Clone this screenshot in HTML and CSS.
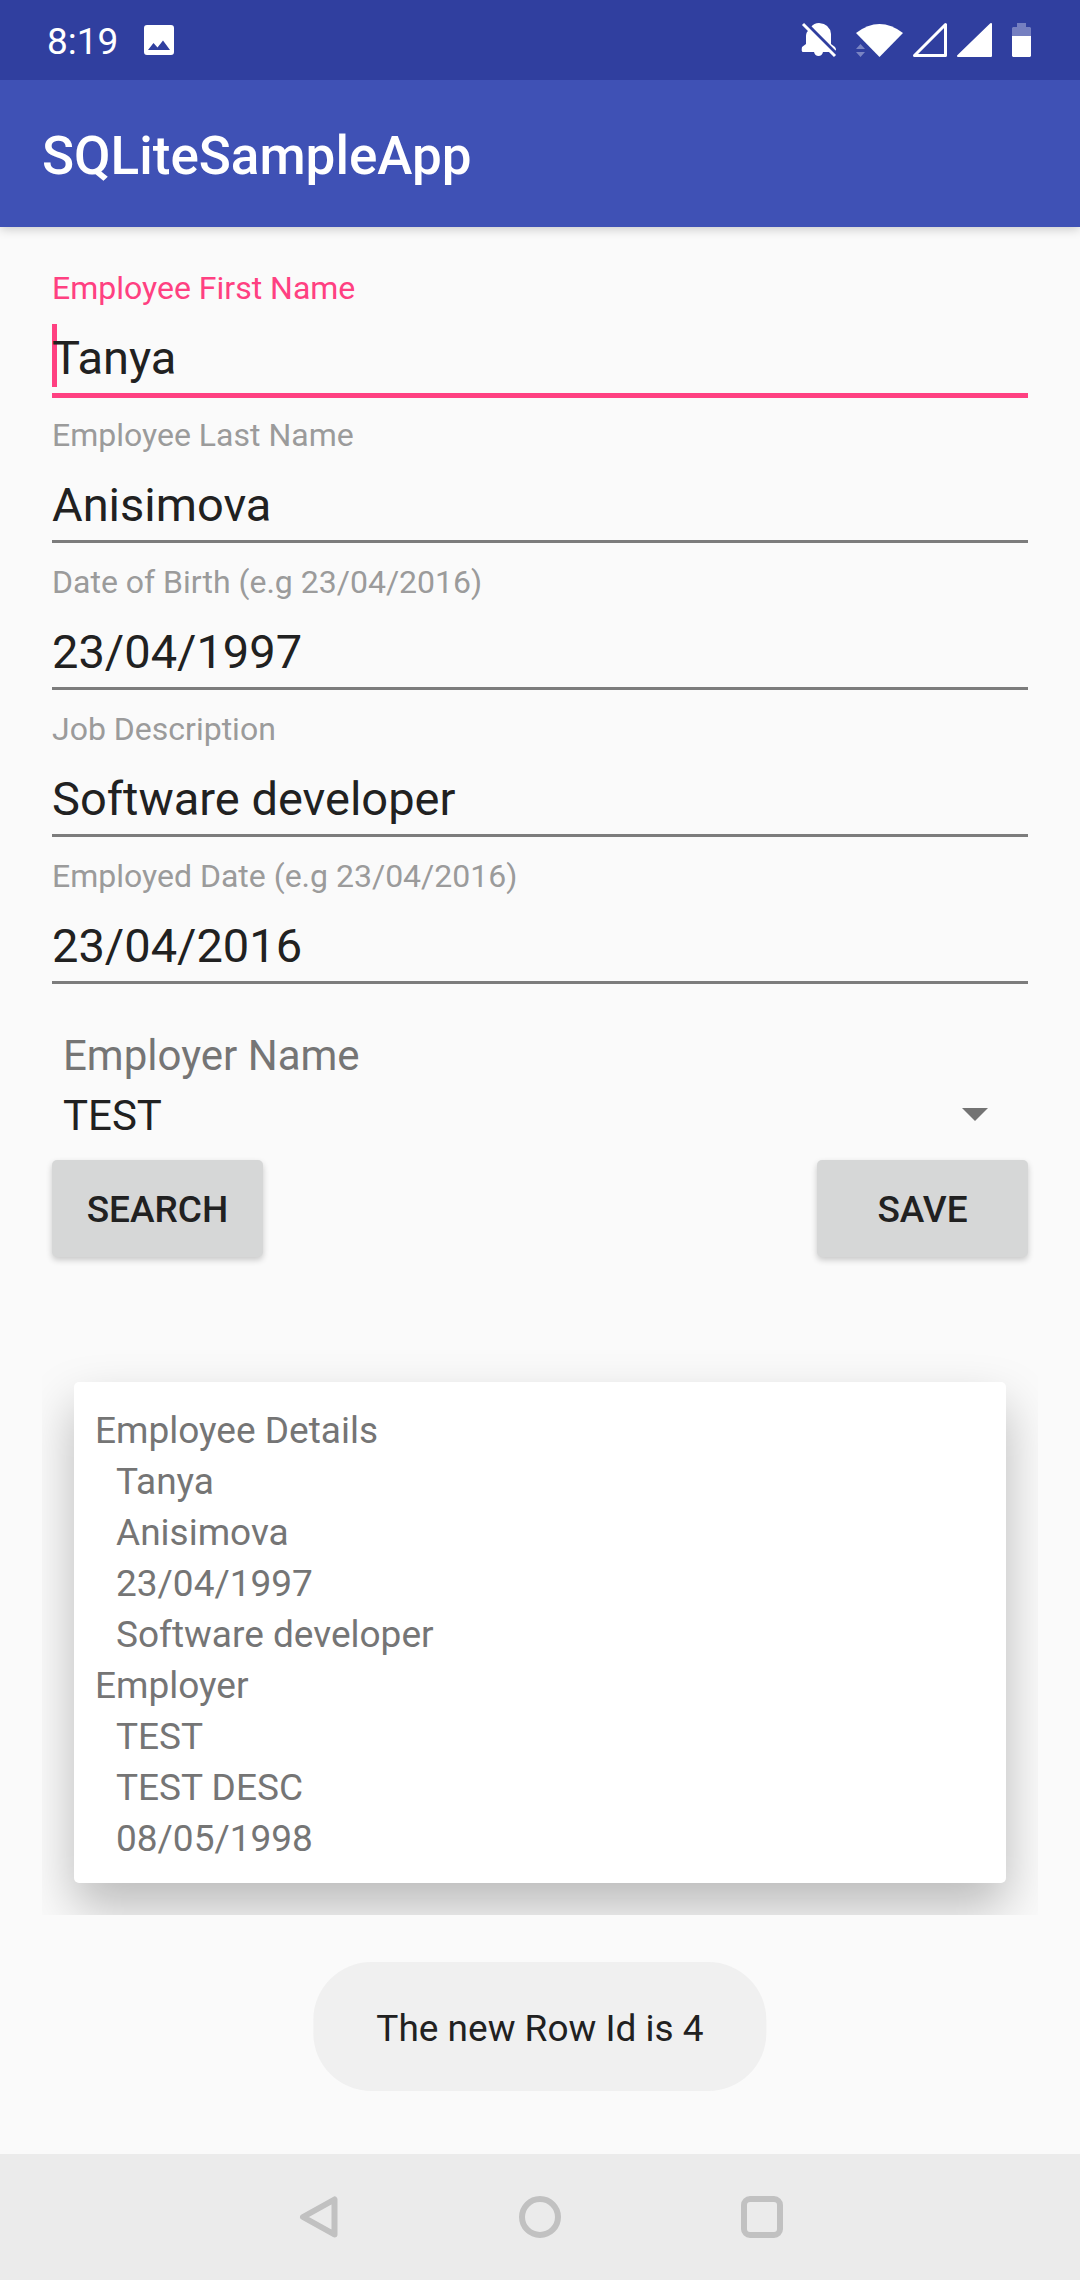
FILE: index.html
```html
<!DOCTYPE html>
<html lang="en">
<head>
<meta charset="utf-8">
<meta name="viewport" content="width=device-width, initial-scale=1">
<title>SQLiteSampleApp</title>
<link rel="stylesheet" href="styles.css">
</head>
<body>
<div class="status-bar">
  <div class="status-left">
    <span>8:19</span>
    <svg width="30" height="30" viewBox="0 0 30 30" aria-hidden="true"><path fill="#fff" fill-rule="evenodd" d="M3 0H27Q30 0 30 3V27Q30 30 27 30H3Q0 30 0 27V3Q0 0 3 0ZM4 25H26L19 15.500L13.500 22.500L9.500 18Z"/></svg>
  </div>
  <div class="status-right">
    <svg class="bell" width="36" height="36" viewBox="0 0 36 36" aria-hidden="true"><path fill="#fff" d="M8 8L30 30H2Q0 30 1 25L5 22V14Q5 10 8 8ZM10 5Q13 1 18 1Q29 2 30 12V22L34 25Q36 28 34 29ZM13 30H22Q21 34 17.500 34Q14 34 13 30Z"/><path stroke="#303f9f" stroke-width="3" d="M5 1L36 32"/><path stroke="#fff" stroke-width="3" d="M2 2L34 34"/></svg>
    <svg width="47" height="36" viewBox="0 0 47 36" aria-hidden="true"><path fill="#fff" d="M0 11Q23.500 -7 47 11L23.500 35Z"/><path fill="#7a84c3" d="M0 27L4.500 22L9 27ZM0 30H9L4.500 35Z"/></svg>
    <svg width="36" height="36" viewBox="0 0 36 36" aria-hidden="true"><path fill="none" stroke="#fff" stroke-width="3" stroke-linejoin="round" d="M33.500 2.500V33.500H2.500Z"/></svg>
    <svg width="35" height="36" viewBox="0 0 35 36" aria-hidden="true"><path fill="#fff" stroke="#fff" stroke-width="2" stroke-linejoin="round" d="M34 2V34H1Z"/></svg>
    <svg class="battery" width="19" height="36" viewBox="0 0 19 36" aria-hidden="true"><path fill="#757fc0" d="M5 1H14V5H18L19 6V14H0V6L1 5H5Z"/><path fill="#fff" d="M0 14H19V34L18 35H1L0 34Z"/></svg>
  </div>
</div>
<header class="app-bar"><h1>SQLiteSampleApp</h1></header>
<main>
  <form>
    <div class="fields">
      <div class="field active"><label for="first">Employee First Name</label><input id="first" type="text" value="Tanya"></div>
      <div class="field"><label for="last">Employee Last Name</label><input id="last" type="text" value="Anisimova"></div>
      <div class="field"><label for="birth">Date of Birth (e.g 23/04/2016)</label><input id="birth" type="text" value="23/04/1997"></div>
      <div class="field"><label for="job">Job Description</label><input id="job" type="text" value="Software developer"></div>
      <div class="field"><label for="employed">Employed Date (e.g 23/04/2016)</label><input id="employed" type="text" value="23/04/2016"></div>
    </div>
    <div class="employer">
      <label for="employer">Employer Name</label>
      <div class="spinner">
        <select id="employer"><option>TEST</option></select>
        <svg width="26" height="13" viewBox="0 0 26 13" aria-hidden="true"><path fill="#737373" d="M0 0H26L13 13Z"/></svg>
      </div>
    </div>
    <div class="actions">
      <button type="button">SEARCH</button>
      <button type="button">SAVE</button>
    </div>
  </form>
  <div class="results">
    <section class="card">
      <h2>Employee Details</h2>
      <p>Tanya</p>
      <p>Anisimova</p>
      <p>23/04/1997</p>
      <p>Software developer</p>
      <h2>Employer</h2>
      <p>TEST</p>
      <p>TEST DESC</p>
      <p>08/05/1998</p>
    </section>
  </div>
  <div class="toast" role="status">The new Row Id is 4</div>
</main>
<nav class="nav-bar">
  <button type="button" aria-label="Back"><svg width="42" height="42" viewBox="0 0 42 42"><path fill="none" stroke="#c1c1c1" stroke-width="6" stroke-linejoin="round" d="M37.500 3.500V38.500L6 21Z"/></svg></button>
  <button type="button" aria-label="Home"><svg width="42" height="42" viewBox="0 0 42 42"><circle cx="21" cy="21" r="18" fill="none" stroke="#c1c1c1" stroke-width="6"/></svg></button>
  <button type="button" aria-label="Overview"><svg width="42" height="42" viewBox="0 0 42 42"><rect x="3" y="3" width="36" height="36" rx="6" fill="none" stroke="#c1c1c1" stroke-width="6"/></svg></button>
</nav>
</body>
</html>
```
FILE: styles.css
```css
* {
  box-sizing: border-box;
}

body {
  margin: 0;
  min-height: 100vh;
  display: flex;
  flex-direction: column;
  background: #fafafa;
  color: #212121;
  font-family: Roboto, sans-serif;
  font-size: 37px;
}

svg {
  display: block;
}

h1, h2, p {
  margin: 0;
}

input, select, button {
  font: inherit;
  color: inherit;
  border: 0;
  border-radius: 0;
  margin: 0;
  padding: 0;
}

.status-bar {
  position: relative;
  z-index: 1;
  display: flex;
  justify-content: space-between;
  align-items: center;
  height: 80px;
  padding: 0 49px 0 47px;
  background: #303f9f;
  color: #fff;
}

.status-left,
.status-right {
  display: flex;
  align-items: center;
}

.status-left {
  gap: 26px;
}

.status-left span {
  padding-top: 2px;
}

.status-right {
  gap: 9px;
}

.bell {
  margin-right: 10px;
}

.battery {
  margin-left: 11px;
}

.app-bar {
  display: flex;
  align-items: center;
  height: 147px;
  padding: 4px 42px 0;
  background: #3f51b5;
  color: #fff;
  box-shadow: 0 2px 10px rgba(0, 0, 0, 0.2);
}

.app-bar h1 {
  font-size: 53px;
  font-weight: 500;
}

main {
  position: relative;
  flex: 1;
  padding: 42px;
}

form {
  padding: 0 10px;
}

.fields {
  display: grid;
  gap: 20px;
}

.field label {
  display: block;
  font-size: 32px;
  line-height: 38px;
  color: #9b9b9b;
}

.field input {
  display: block;
  width: 100%;
  height: 89px;
  padding: 22px 0 8px;
  border-bottom: 3px solid #7c7c7c;
  background: transparent;
  font-size: 47px;
}

.field.active label {
  color: #ff4081;
}

.field.active input {
  border-color: #ff4081;
  box-shadow: 0 2px #ff4081;
  background: linear-gradient(#ff4081, #ff4081) 0 17px / 5px 63px no-repeat;
}

.employer {
  display: grid;
  gap: 10px;
  margin: 47px 0 19px;
  padding: 0 40px 0 11px;
  font-size: 42px;
  line-height: 50px;
}

.employer label {
  color: #757575;
}

.spinner {
  display: grid;
  align-items: center;
}

.spinner select,
.spinner svg {
  grid-area: 1 / 1;
}

.spinner select {
  appearance: none;
  width: 100%;
  height: 50px;
  background: transparent;
}

.spinner svg {
  justify-self: end;
  margin-bottom: 3px;
  pointer-events: none;
}

.actions {
  display: flex;
  justify-content: space-between;
}

.actions button {
  width: 211px;
  height: 97px;
  padding-top: 2px;
  border-radius: 5px;
  background: #d6d7d7;
  font-weight: 500;
  box-shadow: 0 3px 6px rgba(0, 0, 0, 0.2);
}

.results {
  margin-top: 93px;
  padding: 32px;
  overflow: hidden;
}

.card {
  padding: 23px 21px 19px;
  border-radius: 5px;
  background: #fff;
  color: #757575;
  line-height: 51px;
  box-shadow: 0 24px 50px rgba(0, 0, 0, 0.26);
}

.card h2 {
  font: inherit;
}

.card p {
  padding-left: 21px;
}

.toast {
  position: absolute;
  bottom: 63px;
  left: 50%;
  transform: translateX(-50%);
  padding: 44px 63px 40px;
  border-radius: 58px;
  background: #f0f0f0;
  line-height: 45px;
  white-space: nowrap;
}

.nav-bar {
  display: flex;
  justify-content: center;
  align-items: center;
  gap: 180px;
  height: 126px;
  background: #ebebeb;
}

.nav-bar button {
  background: transparent;
}
```
